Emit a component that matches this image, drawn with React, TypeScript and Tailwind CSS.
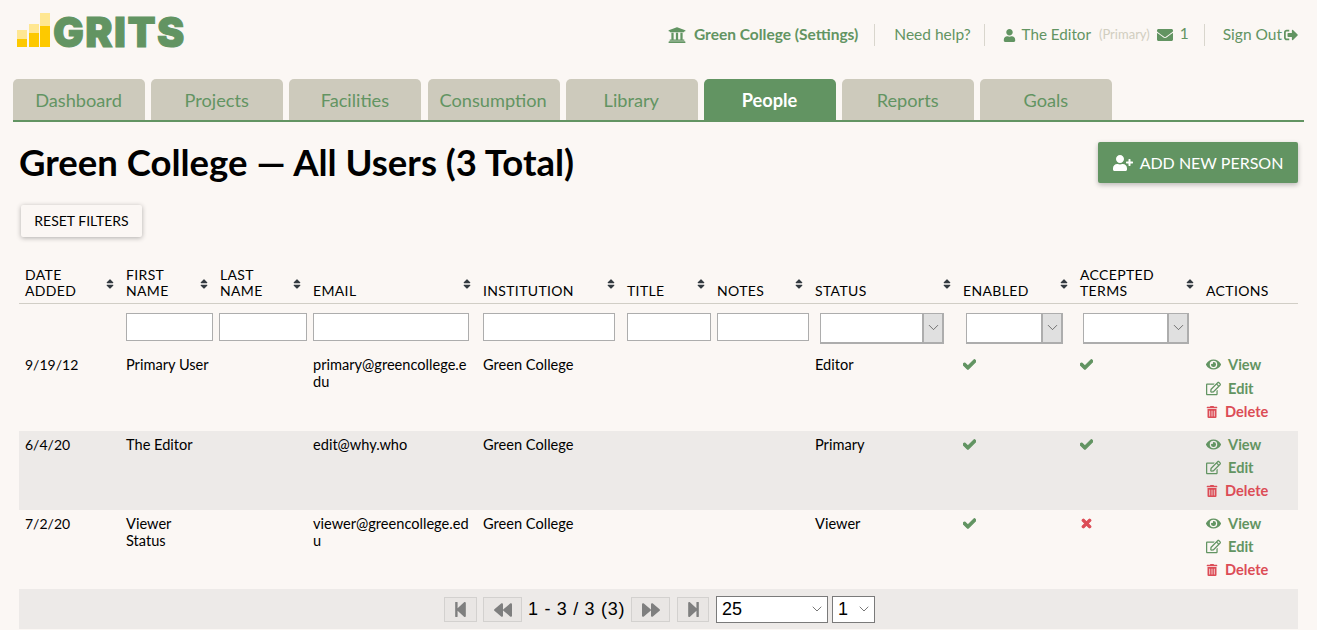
import React from 'react';
import { FaUniversity, FaUser, FaEnvelope, FaSignOutAlt, FaUserPlus, FaSort, FaEye, FaRegEdit, FaTrashAlt, FaCheck, FaTimes, FaStepBackward, FaBackward, FaForward, FaStepForward } from 'react-icons/fa';
import { ChevronDown } from 'lucide-react';

const tabs = ['Dashboard', 'Projects', 'Facilities', 'Consumption', 'Library', 'People', 'Reports', 'Goals'];
const cols = [101, 94, 93, 170, 144, 90, 98, 148, 117, 126, 98];
const heads: [string, string?][] = [['DATE', 'ADDED'], ['FIRST', 'NAME'], ['LAST', 'NAME'], ['EMAIL'], ['INSTITUTION'], ['TITLE'], ['NOTES'], ['STATUS'], ['ENABLED'], ['ACCEPTED', 'TERMS'], ['ACTIONS']];

const rows = [
  { d: '9/19/12', n: ['Primary User'], e: 'primary@greencollege.edu', s: 'Editor', t: true, grey: false, h: 'h-[80px]', gap: 'mt-[7px]' },
  { d: '6/4/20', n: ['The Editor'], e: 'edit@why.who', s: 'Primary', t: true, grey: true, h: 'h-[79px]', gap: 'mt-[6px]' },
  { d: '7/2/20', n: ['Viewer', 'Status'], e: 'viewer@greencollege.edu', s: 'Viewer', t: false, grey: false, h: 'h-[79px]', gap: 'mt-[6px]' },
];

function FilterInput({ w, ml = '' }: { w: string; ml?: string }) {
  return <div className={`h-[28px] bg-white border border-[#adadad] ${w} ${ml}`} />;
}

function FilterSelect({ w, ml }: { w: string; ml: string }) {
  return (
    <div className={`flex h-[31px] bg-white border border-[#adadad] border-b-2 ${w} ${ml}`}>
      <div className="flex-1" />
      <div className="w-[21px] bg-[#e0e0e0] border-2 border-[#adadad] border-t-0 border-b-0 border-r-[1px] flex items-center justify-center">
        <ChevronDown size={17} strokeWidth={0.9} className="text-[#333]" />
      </div>
    </div>
  );
}

function Sep() {
  return <div className="w-px h-[22px] bg-[#d9d6cd]" />;
}

function PageBtn({ w, ml, children }: { w: string; ml: string; children: React.ReactNode }) {
  return (
    <div className={`h-[25px] mt-[1px] bg-[#e9e6e4] border border-[#d3d1cf] flex items-center justify-center text-[#7f7f7f] ${w} ${ml}`}>
      {children}
    </div>
  );
}

export default function App() {
  return (
    <div className="w-[1317px] h-[630px] overflow-hidden bg-[#fbf7f4] font-['Lato',sans-serif] text-black">
      <header className="h-[79px] flex items-start justify-between pl-[17px] pr-[19px]">
        <div className="flex items-end h-[47px] pt-[12px]">
          <svg width="34" height="35" viewBox="0 0 34 35" className="shrink-0">
            <rect x="0" y="18" width="10" height="17" fill="#ffe792" />
            <rect x="0" y="27" width="10" height="8" fill="#fdc900" />
            <rect x="12" y="12" width="10" height="23" fill="#ffe792" />
            <rect x="12" y="21" width="10" height="14" fill="#fdc900" />
            <rect x="23" y="1" width="10" height="34" fill="#ffe792" />
            <rect x="23" y="14" width="10" height="21" fill="#fdc900" />
          </svg>
          <span className="font-['Inter',sans-serif] font-black text-[41px] leading-[40px] tracking-[1.4px] text-[#629462] ml-[2px] -mb-[5px] [-webkit-text-stroke:1px_#629462]">GRITS</span>
        </div>
        <div className="flex items-center h-[24px] mt-[23px] text-[#629462] text-[15.5px]">
          <FaUniversity size={18} className="mr-[8px]" />
          <span className="font-bold">Green College (Settings)</span>
          <div className="ml-[16px] mr-[19px]"><Sep /></div>
          <span>Need help?</span>
          <div className="ml-[13px] mr-[18px]"><Sep /></div>
          <FaUser size={13} className="mr-[6px]" />
          <span className="-mt-[2px] text-[15.2px]">The Editor</span>
          <span className="text-[13px] text-[#d1cec0] ml-[8px]">(Primary)</span>
          <FaEnvelope size={16} className="ml-[7px] mr-[7px]" />
          <span className="-mt-[2px]">1</span>
          <div className="ml-[15px] mr-[18px]"><Sep /></div>
          <span>Sign Out</span>
          <FaSignOutAlt size={14} className="ml-[2px]" />
        </div>
      </header>

      <nav className="mx-[13px] h-[43px] flex gap-[6.2px] border-b-2 border-[#629462]">
        {tabs.map((t) => (
          <div key={t} className={`w-[132px] h-[41px] rounded-t-[5px] flex items-center justify-center text-[18.2px] pt-[2px] pr-[1px] ${t === 'People' ? 'bg-[#629462] text-white font-bold' : 'bg-[#cdcabc] text-[#629462]'}`}>{t}</div>
        ))}
      </nav>

      <div className="flex items-center justify-between px-[19px] mt-[19px] h-[42px]">
        <h1 className="text-[36.5px] leading-[42px] font-bold">Green College — All Users (3 Total)</h1>
        <button className="w-[200px] h-[41px] pt-[1px] bg-[#629462] text-white text-[16px] rounded-[2px] flex items-center justify-center gap-[7px] shadow-[0_2px_5px_rgba(0,0,0,0.25)]">
          <FaUserPlus size={20} />
          ADD NEW PERSON
        </button>
      </div>

      <div className="pl-[21px] mt-[22px] h-[32px]">
        <button className="w-[121px] h-[32px] pb-[2px] bg-[#fbf7f4] text-[14px] rounded-[2px] shadow-[0_1px_5px_rgba(0,0,0,0.3)]">RESET FILTERS</button>
      </div>

      <div className="px-[19px] mt-[28px]">
        <table className="table-fixed border-collapse w-[1279px] text-[14.6px] leading-[17px]">
          <colgroup>
            {cols.map((c, i) => <col key={i} style={{ width: c }} />)}
          </colgroup>
          <thead>
            <tr className="h-[38px] border-b border-[#d1cec6]">
              {heads.map((h, i) => (
                <th key={i} className="relative align-bottom text-left font-normal text-[14px] leading-[16px] tracking-[0.35px] pl-[6px] pb-[4px]">
                  {h[0]}{h[1] && <br />}{h[1]}
                  {i < 10 && <FaSort size={12} className="absolute right-[4px] top-[13px] text-[#333a40]" />}
                </th>
              ))}
            </tr>
            <tr className="h-[48px]">
              <th />
              <th className="align-top pl-[6px] pt-[9px]"><FilterInput w="w-[87px]" /></th>
              <th className="align-top pl-[6px] pt-[9px]"><FilterInput w="w-[88px]" ml="-ml-[1px]" /></th>
              <th className="align-top pl-[6px] pt-[9px]"><FilterInput w="w-[156px]" /></th>
              <th className="align-top pl-[6px] pt-[9px]"><FilterInput w="w-[132px]" /></th>
              <th className="align-top pl-[6px] pt-[9px]"><FilterInput w="w-[84px]" /></th>
              <th className="align-top pl-[6px] pt-[9px]"><FilterInput w="w-[92px]" /></th>
              <th className="align-top pt-[9px]"><FilterSelect w="w-[124px]" ml="ml-[11px]" /></th>
              <th className="align-top pt-[9px]"><FilterSelect w="w-[97px]" ml="ml-[9px]" /></th>
              <th className="align-top pt-[9px]"><FilterSelect w="w-[106px]" ml="ml-[9px]" /></th>
              <th />
            </tr>
          </thead>
          <tbody>
            {rows.map((r) => (
              <tr key={r.d} className={`${r.h} ${r.grey ? 'bg-[#edeae8]' : ''}`}>
                <td className="align-top pl-[6px] pt-[5px] text-[14px]">{r.d}</td>
                <td className="align-top pl-[6px] pt-[5px]">{r.n.map((x) => <div key={x}>{x}</div>)}</td>
                <td />
                <td className="align-top pl-[6px] pr-[8px] pt-[5px] break-all">{r.e}</td>
                <td className="align-top pl-[6px] pt-[5px]">Green College</td>
                <td />
                <td />
                <td className="align-top pl-[6px] pt-[5px]">{r.s}</td>
                <td className="align-top pl-[6px] pt-[5px]"><FaCheck size={13} className="mt-[2px] text-[#629462] stroke-[40px]" /></td>
                <td className="align-top pl-[6px] pt-[5px]">
                  {r.t ? <FaCheck size={13} className="mt-[2px] text-[#629462] stroke-[40px]" /> : <FaTimes size={13} className="mt-[2px] text-[#dc4c56] stroke-[40px]" />}
                </td>
                <td className="align-top pl-[6px] pt-[5px] font-bold">
                  <div className="flex items-center h-[17px] text-[#629462]"><FaEye size={15} className="mr-[7px]" />View</div>
                  <div className={`flex items-center h-[17px] ${r.gap} text-[#629462]`}><FaRegEdit size={15} className="mr-[7px]" />Edit</div>
                  <div className="flex items-center h-[17px] mt-[6px] text-[#dc4c56]"><FaTrashAlt size={12} className="mr-[7px]" />Delete</div>
                </td>
              </tr>
            ))}
          </tbody>
        </table>
        <div className="h-[40px] pl-[2px] bg-[#edeae8] flex items-center justify-center font-['Liberation_Sans',sans-serif] text-[18px]">
          <PageBtn w="w-[33px]" ml="ml-0"><FaStepBackward size={17} /></PageBtn>
          <PageBtn w="w-[39px]" ml="ml-[6px]"><FaBackward size={18} /></PageBtn>
          <span className="ml-[6px] w-[96px] tracking-[0.7px] whitespace-nowrap">1 - 3 / 3 (3)</span>
          <PageBtn w="w-[39px]" ml="ml-[7px]"><FaForward size={18} /></PageBtn>
          <PageBtn w="w-[32px]" ml="ml-[7px]"><FaStepForward size={17} /></PageBtn>
          <div className="w-[112px] h-[27px] ml-[7px] bg-white border border-[#7a7a7a] flex items-center justify-between pl-[5px] pr-[2px]">
            <span>25</span><ChevronDown size={16} strokeWidth={1} className="text-[#333]" />
          </div>
          <div className="w-[43px] h-[27px] ml-[4px] bg-white border border-[#7a7a7a] flex items-center justify-between pl-[5px] pr-[2px]">
            <span>1</span><ChevronDown size={16} strokeWidth={1} className="text-[#333]" />
          </div>
        </div>
      </div>
    </div>
  );
}
